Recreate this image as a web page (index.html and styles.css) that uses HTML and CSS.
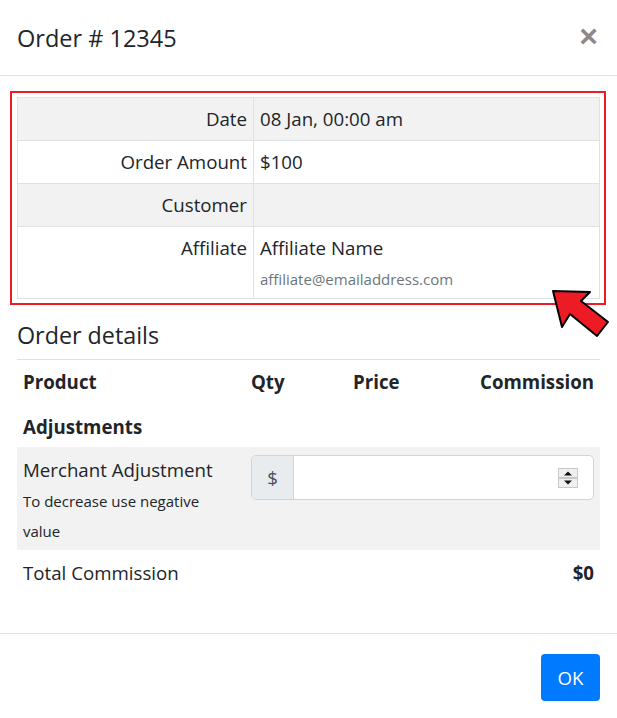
FILE: index.html
```html
<!DOCTYPE html>
<html lang="en">
<head>
<meta charset="utf-8">
<title>Order # 12345</title>
<link rel="stylesheet" href="styles.css">
</head>
<body>
<div class="modal">
  <div class="modal-header">
    <h4 class="modal-title">Order # 12345</h4>
    <button class="close" type="button" aria-label="Close">&times;</button>
  </div>
  <div class="modal-body">
    <div class="highlight">
      <table class="info">
        <tr class="alt"><th>Date</th><td>08 Jan, 00:00 am</td></tr>
        <tr><th>Order Amount</th><td>$100</td></tr>
        <tr class="alt"><th>Customer</th><td></td></tr>
        <tr><th>Affiliate</th><td>Affiliate Name<span class="email">affiliate@emailaddress.com</span></td></tr>
      </table>
    </div>
    <h4 class="section-title">Order details</h4>
    <div class="details">
      <div class="row head">
        <div class="c-product">Product</div>
        <div class="c-qty">Qty</div>
        <div class="c-price">Price</div>
        <div class="c-comm">Commission</div>
      </div>
      <div class="row head"><div class="c-product">Adjustments</div></div>
      <div class="row adj">
        <div class="adj-label">
          <div>Merchant Adjustment</div>
          <div class="hint">To decrease use negative value</div>
        </div>
        <div class="input-group">
          <span class="prepend">$</span>
          <div class="input">
            <svg class="spinner" width="20" height="20" viewBox="0 0 20 20">
              <rect x="0.5" y="0.5" width="19" height="19" fill="#f0f0f0" stroke="#c8c8c8"/>
              <line x1="1" y1="10" x2="19" y2="10" stroke="#a0a0a0"/>
              <path d="M6 7.5 L14 7.5 L10 3.5 Z" fill="#111"/>
              <path d="M6 12.5 L14 12.5 L10 16.5 Z" fill="#111"/>
            </svg>
          </div>
        </div>
      </div>
      <div class="row total">
        <div>Total Commission</div>
        <div class="total-value">$0</div>
      </div>
    </div>
  </div>
  <div class="modal-footer">
    <button class="btn" type="button">OK</button>
  </div>
  <svg class="arrow" width="70" height="60" viewBox="0 0 70 60">
    <polygon points="3,2 40,3 31,12 58,33 47,47 20,25 12,38" fill="#ed1c24" stroke="#000" stroke-width="2" stroke-linejoin="round"/>
  </svg>
</div>
</body>
</html>
```
FILE: styles.css
```css
* { box-sizing: border-box; }
html, body { margin: 0; padding: 0; background: #fff; }
body {
  font-family: "Open Sans", "Noto Sans", sans-serif;
  font-size: 18.7px;
  line-height: 24px;
  color: #212529;
}
.modal { position: relative; width: 617px; }
.modal-header {
  display: flex;
  align-items: center;
  justify-content: space-between;
  padding: 16px 16px 16px 17px;
  border-bottom: 1px solid #dee2e6;
  height: 76px;
}
.modal-title {
  margin: 0;
  font-size: 23.5px;
  font-weight: 400;
  line-height: 42px;
}
.close {
  border: 0;
  background: transparent;
  padding: 0;
  margin: 0 3px 4px 0;
  font-family: "Liberation Sans", sans-serif;
  font-size: 32px;
  font-weight: 700;
  line-height: 30px;
  color: #8a8a8a;
}
.modal-body { padding: 15px 17px 37px 17px; }
.highlight {
  margin: 0 -6px 0 -7px;
  border: 2px solid #ed1c24;
  padding: 4px 4px 4px 5px;
}
.info {
  width: 100%;
  border-collapse: collapse;
  border: 1px solid #dee2e6;
}
.info th, .info td {
  border: 1px solid #dee2e6;
  padding: 9px 6px;
  vertical-align: top;
  font-weight: 400;
  height: 43px;
}
.info th { width: 236px; text-align: right; }
.info tr.alt { background: #f2f2f2; }
.email {
  display: block;
  font-size: 15px;
  line-height: 20px;
  margin-top: 9px;
  color: #6c757d;
}
.section-title {
  margin: 12px 0 0;
  font-size: 23.3px;
  font-weight: 400;
  line-height: 36px;
  padding-bottom: 6px;
  border-bottom: 1px solid #dee2e6;
}
.row {
  display: grid;
  grid-template-columns: 228px 102px 1fr 1fr;
}
.row > div { padding: 0 6px; }
.head { padding: 10px 0; font-weight: 700; height: 44px; }
.head + .head { height: 43px; padding: 11px 0 8px; }
.c-comm { text-align: right; }
.adj {
  background: #f2f2f2;
  grid-template-columns: 228px 1fr;
  padding: 8px 0;
  height: 103px;
}
.adj-label { padding-top: 3px !important; }
.hint {
  font-size: 15px;
  line-height: 30px;
  margin-top: 4px;
  width: 190px;
}
.input-group {
  display: flex;
  height: 45px;
  margin: 0 6px;
  padding: 0 !important;
  border: 1px solid #ced4da;
  border-radius: 5px;
  overflow: hidden;
  background: #fff;
}
.prepend {
  width: 42px;
  flex: none;
  background: #e9ecef;
  border-right: 1px solid #ced4da;
  display: flex;
  align-items: center;
  justify-content: center;
  color: #495057;
}
.input {
  flex: 1;
  display: flex;
  align-items: center;
  justify-content: flex-end;
  padding-right: 15px;
}
.total {
  grid-template-columns: 1fr auto;
  padding: 11px 0;
  height: 46px;
}
.total-value { font-weight: 700; }
.modal-footer {
  border-top: 1px solid #dee2e6;
  display: flex;
  justify-content: flex-end;
  padding: 20px 17px 16px;
}
.btn {
  width: 59px;
  height: 47px;
  border: 0;
  border-radius: 4px;
  background: #007bff;
  color: #fff;
  font-family: "Open Sans", sans-serif;
  font-size: 18.7px;
  padding: 0;
}
.arrow { position: absolute; left: 550px; top: 289px; }
```
